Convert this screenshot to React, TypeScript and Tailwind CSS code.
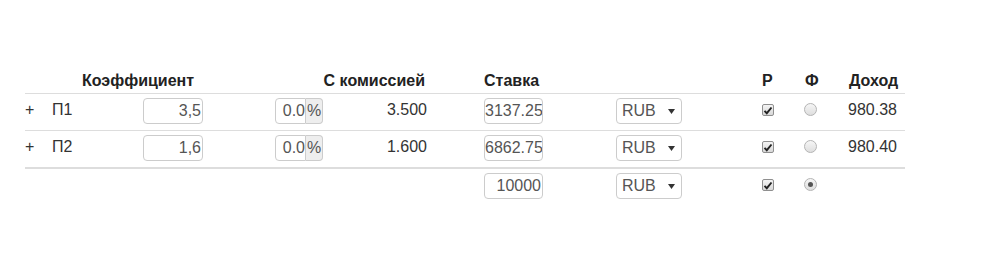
import React from "react";

function NumInput({ value, cls }: { value: string; cls: string }) {
  return (
    <input
      readOnly
      value={value}
      className={
        "mt-[4px] h-[26px] rounded-[4px] border border-[#ccc] bg-white text-right text-[16px] text-[#555] outline-none font-['Liberation_Sans',Arial,sans-serif] " +
        cls
      }
    />
  );
}

function PctGroup() {
  return (
    <div className="mt-[4px] flex h-[26px] w-[48px]">
      <input
        readOnly
        value="0.0"
        className="h-[26px] w-[31px] rounded-l-[4px] border border-[#ccc] bg-white px-0 text-right text-[16px] text-[#555] outline-none font-['Liberation_Sans',Arial,sans-serif]"
      />
      <div className="flex h-[26px] w-[17px] items-center justify-center rounded-r-[4px] border border-l-0 border-[#ccc] bg-[#eee] text-[16px] text-[#555]">
        %
      </div>
    </div>
  );
}

function CurrencySelect() {
  return (
    <div className="mt-[4px] flex h-[26px] w-[66px] items-center justify-between rounded-[4px] border border-[#ccc] bg-white pl-[5px] pr-[5px] text-[16px] text-[#555]">
      <span>RUB</span>
      <svg width="7" height="5" viewBox="0 0 7 5" className="mr-[1px]">
        <path d="M0 0 H7 L3.5 5 Z" fill="#333" />
      </svg>
    </div>
  );
}

function Check() {
  return (
    <div className="mt-[10px] flex h-[12px] w-[12px] items-center justify-center rounded-[2px] border border-[#8f8f8f] bg-gradient-to-b from-[#f4f4f4] to-[#d8d8d8]">
      <svg width="10" height="9" viewBox="0 0 10 9">
        <path d="M1.5 4.8 L3.8 7.2 L8.5 1.5" stroke="#222" strokeWidth="1.9" fill="none" />
      </svg>
    </div>
  );
}

function Radio({ checked }: { checked?: boolean }) {
  return (
    <div className="mt-[9px] ml-[1px] flex h-[13px] w-[13px] items-center justify-center rounded-full border border-[#b4b4b4] bg-gradient-to-b from-[#f6f6f6] to-[#dedede]">
      {checked ? <div className="h-[5px] w-[5px] rounded-full bg-[#555]" /> : null}
    </div>
  );
}

function DataRow({
  name,
  koef,
  value,
  stake,
  income,
  cls,
}: {
  name: string;
  koef: string;
  value: string;
  stake: string;
  income: string;
  cls: string;
}) {
  return (
    <div className={"flex items-start " + cls}>
      <div className="mt-[6px] w-[27px] leading-[20px]">+</div>
      <div className="mt-[6px] w-[91px] leading-[20px]">{name}</div>
      <NumInput value={koef} cls="w-[60px] px-[1px]" />
      <div className="w-[72px]" />
      <PctGroup />
      <div className="mt-[6px] w-[104px] text-right leading-[20px]">{value}</div>
      <div className="w-[57px]" />
      <NumInput value={stake} cls="w-[59px] px-0" />
      <div className="w-[73px]" />
      <CurrencySelect />
      <div className="w-[80px]" />
      <Check />
      <div className="w-[29px]" />
      <Radio />
      <div className="w-[31px]" />
      <div className="mt-[6px] leading-[20px]">{income}</div>
    </div>
  );
}

export default function App() {
  return (
    <div className="min-h-[280px] w-full bg-white font-['Liberation_Sans',Arial,sans-serif] text-[16px] text-[#333]">
      <div className="pl-[25px] pt-[71px]">
        <div className="w-[880px]">
          <div className="flex h-[23px] border-b border-[#ddd] text-[16px] font-bold leading-[20px] text-[#222]">
            <div className="w-[57px]" />
            <div className="w-[168px]">Коэффициент</div>
            <div className="w-[175px] text-right">С комиссией</div>
            <div className="ml-[59px] w-[278px]">Ставка</div>
            <div className="w-[43px]">Р</div>
            <div className="w-[44px]">Ф</div>
            <div>Доход</div>
          </div>
          <DataRow
            name="П1"
            koef="3,5"
            value="3.500"
            stake="3137.25"
            income="980.38"
            cls="h-[37px] border-b border-[#ddd]"
          />
          <DataRow
            name="П2"
            koef="1,6"
            value="1.600"
            stake="6862.75"
            income="980.40"
            cls="h-[38px] border-b-2 border-[#ddd]"
          />
          <div className="flex h-[36px] items-start">
            <div className="w-[459px]" />
            <NumInput value="10000" cls="w-[59px] px-[1px]" />
            <div className="w-[73px]" />
            <CurrencySelect />
            <div className="w-[80px]" />
            <Check />
            <div className="w-[29px]" />
            <Radio checked />
          </div>
        </div>
      </div>
    </div>
  );
}
